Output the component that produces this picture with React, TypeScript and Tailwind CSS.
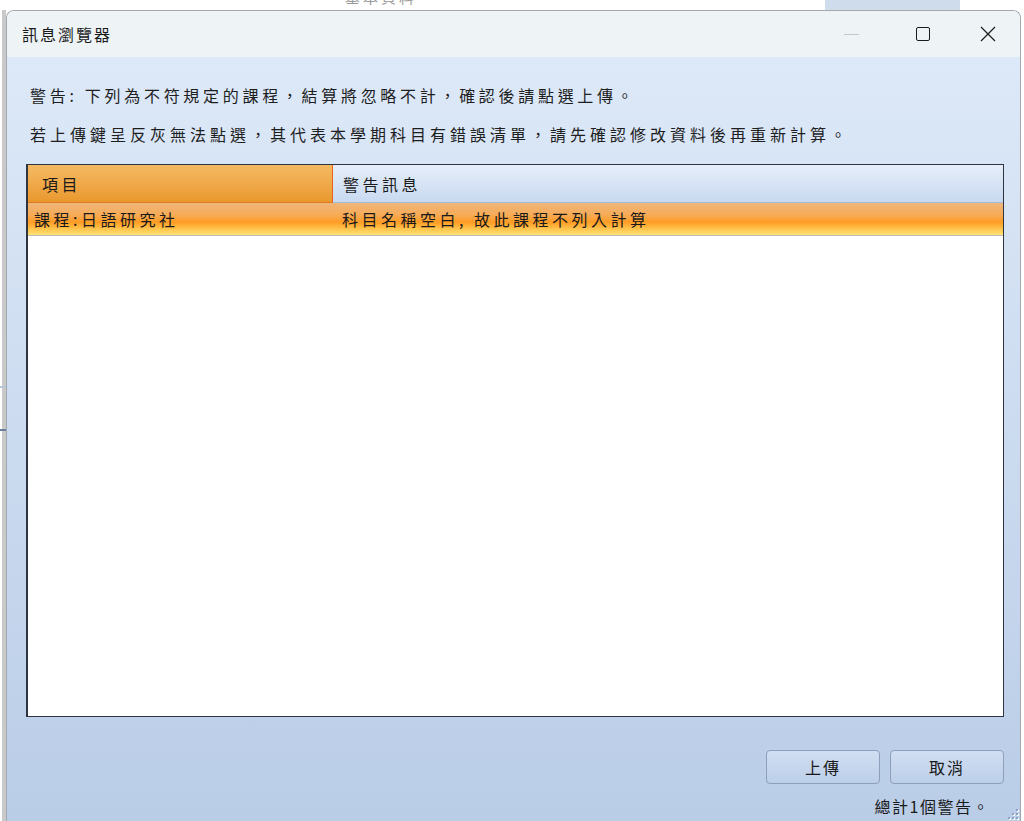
import React from "react";

const font = { fontFamily: '"Noto Sans CJK TC", "Noto Sans", sans-serif' };

function Grip() {
  const dots: [number, number][] = [
    [12, 2],
    [8, 6], [12, 6],
    [4, 10], [8, 10], [12, 10],
    [0, 14], [4, 14], [8, 14], [12, 14],
  ];
  return (
    <svg width="16" height="17" viewBox="0 0 16 17" className="block">
      {dots.map(([x, y], i) => (
        <g key={i}>
          <rect x={x + 1} y={y + 1} width="2" height="2" fill="#ffffff" />
          <rect x={x} y={y} width="2" height="2" fill="#8fa4c4" />
        </g>
      ))}
    </svg>
  );
}

export default function App() {
  return (
    <div
      className="relative w-[1024px] h-[821px] overflow-hidden bg-white flex flex-col"
      style={font}
    >
      {/* background app strip above window */}
      <div className="h-[10px] flex shrink-0 relative">
        <div className="absolute left-[345px] top-[-11px] text-[15px] text-[#9a9a9a] tracking-[3px] leading-[16px]">
          基本資料
        </div>
        <div className="absolute left-[825px] top-0 w-[135px] h-[10px] bg-[#cfdcec]" />
      </div>
      <div className="flex flex-1 min-h-0">
        {/* left remnant of background app */}
        <div className="w-[6px] shrink-0 flex">
          <div className="w-[2px] bg-white" />
          <div className="w-[4px] bg-[#c9c9c9] relative">
            <div className="absolute left-[-2px] top-[419px] w-[6px] h-[2px] bg-[#6d7f9a]" />
            <div className="absolute left-[-2px] top-[376px] w-[6px] h-[2px] bg-[#b9c6d8]" />
          </div>
        </div>
        {/* window */}
        <div className="w-[1015px] flex flex-col border border-b-0 border-[#a3a8ae] rounded-t-[8px] overflow-hidden">
          {/* title bar */}
          <div className="h-[46px] shrink-0 bg-[#eef3f6] flex items-center">
            <div className="pl-[15px] text-[16px] tracking-[2px] text-[#1a1a1a] leading-none">
              訊息瀏覽器
            </div>
            <div className="ml-auto flex items-center h-full">
              <div className="w-[70px] h-full flex items-center justify-center">
                <div className="w-[15px] h-[1px] bg-[#c4c6c8]" />
              </div>
              <div className="w-[70px] h-full flex items-center justify-center">
                <div className="ml-[4px] w-[14px] h-[14px] border border-[#1a1a1a] rounded-[2px]" />
              </div>
              <div className="w-[64px] h-full flex items-center justify-center">
                <svg width="16" height="16" viewBox="0 0 16 16">
                  <path d="M1 1 L15 15 M15 1 L1 15" stroke="#1a1a1a" strokeWidth="1.2" />
                </svg>
              </div>
            </div>
          </div>
          {/* body */}
          <div className="flex-1 flex flex-col bg-gradient-to-b from-[#dde9f8] to-[#bacde7] pl-[19px] pr-[16px] pt-[19px]">
            <div className="pl-[4px] text-[16px] leading-[39px] tracking-[3.7px] text-[#1e1e1e] whitespace-nowrap">
              警告: 下列為不符規定的課程，結算將忽略不計，確認後請點選上傳。
            </div>
            <div className="pl-[4px] text-[16px] leading-[39px] tracking-[4px] text-[#1e1e1e] whitespace-nowrap">
              若上傳鍵呈反灰無法點選，其代表本學期科目有錯誤清單，請先確認修改資料後再重新計算。
            </div>
            {/* table */}
            <div className="mt-[10px] h-[553px] shrink-0 border border-[#2e3440] border-l-2 bg-white flex flex-col">
              <div className="h-[38px] shrink-0 flex">
                <div className="w-[305px] bg-gradient-to-b from-[#f4ba62] to-[#ea982c] border-r border-[#e8641c] border-b border-b-[#e07a20] flex items-center pl-[14px] text-[16px] tracking-[3.5px] text-[#1a1a1a]">
                  項目
                </div>
                <div className="flex-1 bg-gradient-to-b from-[#e6eef9] to-[#c8d9f0] border-b border-[#a4bcd9] flex items-center pl-[10px] text-[16px] tracking-[3.5px] text-[#1a1a1a]">
                  警告訊息
                </div>
              </div>
              <div className="h-[33px] shrink-0 flex items-center bg-[linear-gradient(to_bottom,#efb57a_0%,#f6ac5a_35%,#ff9c24_60%,#ffc24a_80%,#ffe276_100%)] border-b border-[#bdbdbd] text-[16px] text-[#1a1a1a]">
                <div className="w-[306px] pl-[6px] tracking-[3.5px] whitespace-nowrap">課程:日語研究社</div>
                <div className="pl-[8px] tracking-[3.5px] whitespace-nowrap">科目名稱空白, 故此課程不列入計算</div>
              </div>
              <div className="flex-1" />
            </div>
            {/* buttons */}
            <div className="mt-[33px] flex justify-end gap-[10px]">
              <button className="w-[114px] h-[34px] rounded-[4px] border border-[#8d9fbb] bg-gradient-to-b from-[#d0def1] to-[#bccfe9] text-[16px] tracking-[2px] text-[#1a1a1a]">
                上傳
              </button>
              <button className="w-[114px] h-[34px] rounded-[4px] border border-[#8d9fbb] bg-gradient-to-b from-[#d0def1] to-[#bccfe9] text-[16px] tracking-[2px] text-[#1a1a1a]">
                取消
              </button>
            </div>
            <div className="flex justify-end items-end mt-[6px] flex-1 mr-[-16px]">
              <div className="text-[16px] tracking-[1.5px] text-[#1a1a1a] mb-[3px] mr-[14px] whitespace-nowrap">
                總計1個警告。
              </div>
              <div className="mb-[-3px]">
                <Grip />
              </div>
            </div>
          </div>
        </div>
      </div>
    </div>
  );
}
